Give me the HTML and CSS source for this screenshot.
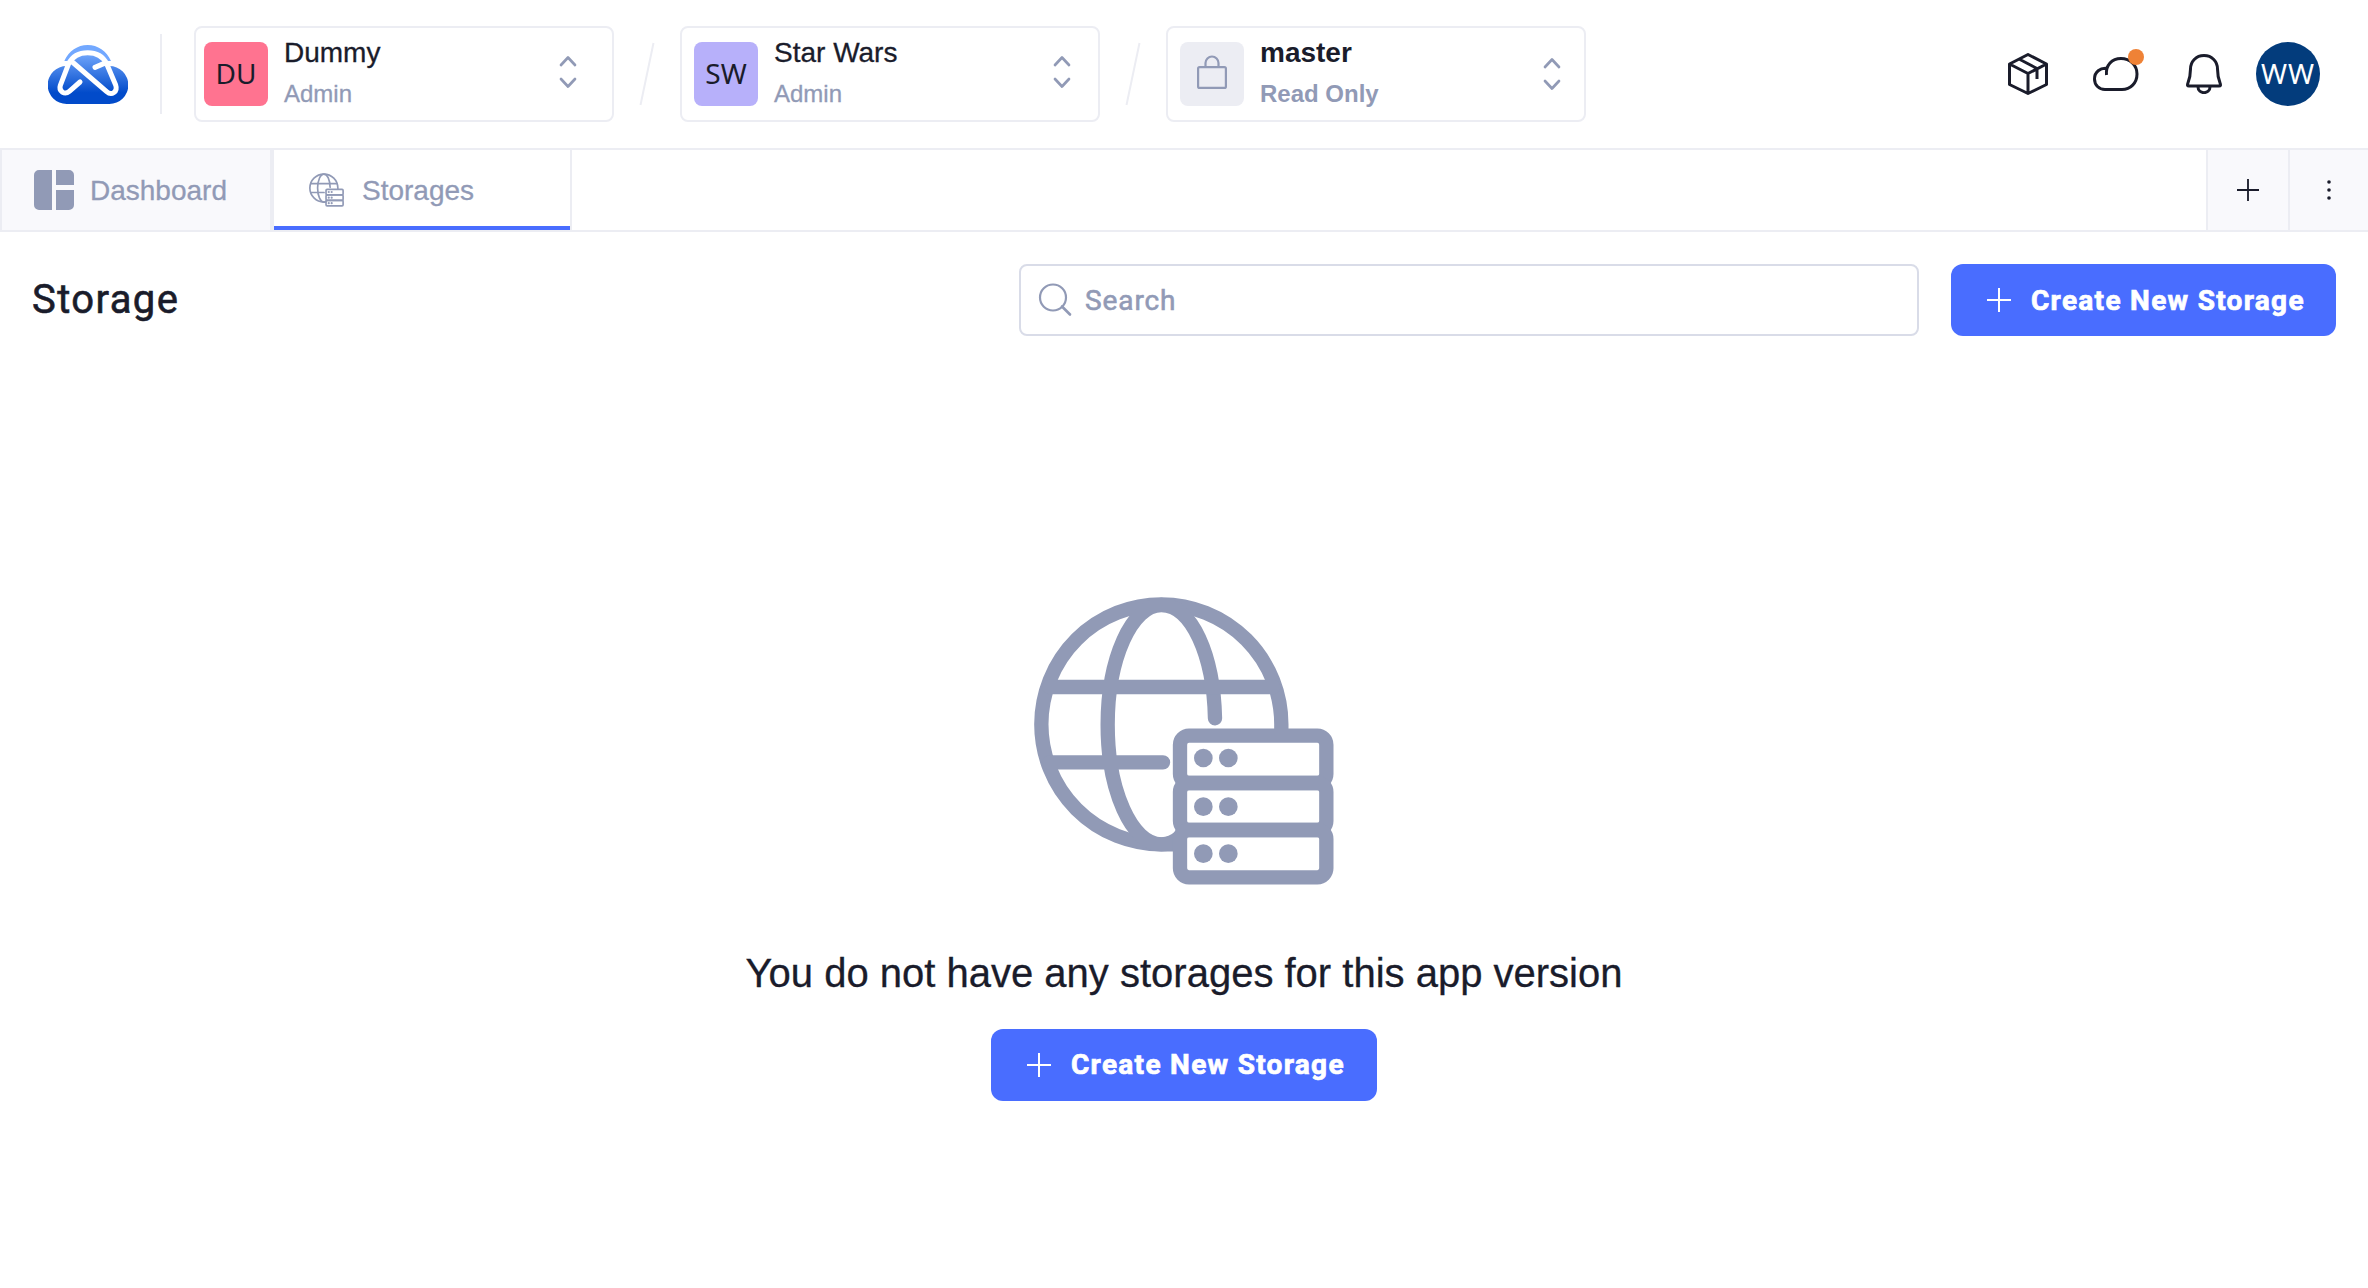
FILE: index.html
```html
<!DOCTYPE html>
<html lang="en">
<head>
<meta charset="utf-8">
<title>Storages</title>
<link rel="stylesheet" href="styles.css">
</head>
<body>
<svg class="sprite" aria-hidden="true">
  <symbol id="storage" viewBox="72 51 900 864">
    <g fill="none" stroke="currentColor" stroke-width="43" stroke-linecap="round">
      <path d="M814 455V434A360 360 0 1 0 454 793H500"/>
      <path d="M615 415C611 225 545 75 454 75C365 75 293 236 293 434S365 793 454 793C475 793 492 787 508 772"/>
      <path d="M118 321H790M118 547H459"/>
      <rect x="510" y="467" width="439" height="142" rx="27"/>
      <rect x="510" y="609" width="439" height="141" rx="27"/>
      <rect x="510" y="750" width="439" height="142" rx="27"/>
    </g>
    <g fill="currentColor">
      <circle cx="580" cy="534" r="28"/><circle cx="655" cy="534" r="28"/>
      <circle cx="580" cy="680" r="28"/><circle cx="655" cy="680" r="28"/>
      <circle cx="580" cy="821" r="28"/><circle cx="655" cy="821" r="28"/>
    </g>
  </symbol>
  <symbol id="updown" viewBox="0 0 18 34">
    <path d="M2 10L9 2.500L16 10M2 24L9 31.500L16 24" fill="none" stroke="currentColor" stroke-width="2.7" stroke-linecap="round" stroke-linejoin="round"/>
  </symbol>
  <symbol id="plus" viewBox="0 0 24 24">
    <path d="M12 0V24M0 12H24" fill="none" stroke="currentColor" stroke-width="2"/>
  </symbol>
</svg>

<header class="topbar">
  <svg class="logo" viewBox="54 42 240 177">
    <defs>
      <linearGradient id="sky" gradientUnits="userSpaceOnUse" x1="0" y1="60" x2="0" y2="185">
        <stop offset="0" stop-color="#78acff"/><stop offset="1" stop-color="#024bca"/>
      </linearGradient>
    </defs>
    <path d="M103 90C116 60 143 42 173 42S230 60 243 90H226C216 72 198 62 173 62S130 72 120 90Z" fill="#72a8ff"/>
    <path d="M110 105H118C130 80 148 68 173 68S216 80 228 105H238A57 57 0 0 1 238 219H110A57 57 0 0 1 110 105Z" fill="url(#sky)"/>
    <path d="M150 153L118 181C104 193 85 181 91 163L116 98C127 76 148 65 173 65S219 76 230 98L257 162C264 182 245 195 230 182L127 93M195 109L228 95" fill="none" stroke="#fff" stroke-width="15" stroke-linecap="round" stroke-linejoin="round"/>
  </svg>
  <span class="rule"></span>
  <button class="picker picker-first">
    <span class="badge pink">DU</span>
    <span class="who"><span class="name">Dummy</span><span class="role">Admin</span></span>
    <svg class="updown"><use href="#updown"/></svg>
  </button>
  <svg class="slash" viewBox="0 0 16 64"><path d="M14.500 1L1.500 63"/></svg>
  <button class="picker">
    <span class="badge violet">SW</span>
    <span class="who"><span class="name">Star Wars</span><span class="role">Admin</span></span>
    <svg class="updown"><use href="#updown"/></svg>
  </button>
  <svg class="slash" viewBox="0 0 16 64"><path d="M14.500 1L1.500 63"/></svg>
  <button class="picker picker-branch">
    <span class="badge grey">
      <svg class="lock" viewBox="0 0 30 34"><g fill="none" stroke="currentColor" stroke-width="2.200"><rect x="1.100" y="12.100" width="27.800" height="20.800" rx="1.500"/><path d="M8.500 12V8a6.500 6.500 0 0 1 13 0v4"/></g></svg>
    </span>
    <span class="who"><span class="name">master</span><span class="role">Read Only</span></span>
    <svg class="updown"><use href="#updown"/></svg>
  </button>

  <nav class="actions">
    <svg class="cube" viewBox="0 0 40 42"><path d="M20 1.500L38.500 11V31.500L20 40.500L1.500 31.500V11ZM1.500 11L20 20.500L38.500 11M20 20.500V40.500M11 6L29 15.500V26"/></svg>
    <span class="cloud-wrap">
      <svg class="cloud" viewBox="0 0 46 34"><path d="M13.500 18C12.500 8 19 1.500 28 1.500C37 1.500 44 8 44 17C44 26 37.500 32.500 29 32.500H12C6 32.500 1.500 28 1.500 22C1.500 15 7 10.500 14.500 11.500"/></svg>
      <span class="dot"></span>
    </span>
    <svg class="bell" viewBox="0 0 36 40"><path d="M18 1.500C10 1.500 4.500 7.500 4.500 15C4.500 21 4.200 23.500 1.800 29.500C1.200 31.500 1.500 32 3 32H33C34.500 32 34.800 31.500 34.200 29.500C31.800 23.500 31.500 21 31.500 15C31.500 7.500 26 1.500 18 1.500ZM12 33C12 40.500 24 40.500 24 33"/></svg>
    <span class="user">WW</span>
  </nav>
</header>

<div class="tabs">
  <a class="tab">
    <svg class="grid-icon" viewBox="0 0 40 40"><path d="M5 0H18V40H5A5 5 0 0 1 0 35V5A5 5 0 0 1 5 0ZM22 0H35A5 5 0 0 1 40 5V15H22ZM22 20H40V35A5 5 0 0 1 35 40H22Z" fill="currentColor"/></svg>
    <span>Dashboard</span>
  </a>
  <a class="tab active">
    <svg class="tab-storage"><use href="#storage"/></svg>
    <span>Storages</span>
  </a>
  <button class="tab-tool"><svg class="plus-tab"><use href="#plus"/></svg></button>
  <button class="tab-tool last"><svg class="dots" viewBox="0 0 4 20"><circle cx="2" cy="2" r="1.800"/><circle cx="2" cy="10" r="1.800"/><circle cx="2" cy="18" r="1.800"/></svg></button>
</div>

<main>
  <div class="toolbar">
    <h1>Storage</h1>
    <label class="search">
      <svg class="lens" viewBox="0 0 34 34"><g fill="none" stroke="currentColor" stroke-width="2.200"><circle cx="15" cy="14.500" r="13"/><path d="M24 23.500L32 31.500" stroke-width="2.600" stroke-linecap="round"/></g></svg>
      <span>Search</span>
    </label>
    <button class="create"><svg class="plus"><use href="#plus"/></svg><span>Create New Storage</span></button>
  </div>
  <section class="empty">
    <svg class="empty-icon"><use href="#storage"/></svg>
    <p>You do not have any storages for this app version</p>
    <button class="create create-empty"><svg class="plus"><use href="#plus"/></svg><span>Create New Storage</span></button>
  </section>
</main>
</body>
</html>
```
FILE: styles.css
```css
* { box-sizing: border-box; }
body {
  margin: 0;
  background: #fff;
  color: #1a1c2b;
  font-family: "Liberation Sans", sans-serif;
  font-size: 28px;
  -webkit-text-stroke: .3px;
}
button { font: inherit; color: inherit; border: 0; background: none; padding: 0; text-align: left; }
svg { display: block; flex: none; }
.sprite { position: absolute; width: 0; height: 0; }

.topbar { display: flex; align-items: center; height: 148px; padding: 0 48px; }
.logo { width: 80px; height: 59px; }
.rule { width: 2px; height: 80px; margin: 0 32px; background: #ecedf3; }
.picker {
  display: flex; align-items: center; flex: none;
  width: 420px; height: 96px; padding: 0 27px 0 12px;
  border: 2px solid #ecedf3; border-radius: 8px;
}
.picker-first { padding: 0 35px 0 8px; }
.picker-branch { padding-right: 23px; }
.badge {
  display: flex; align-items: center; justify-content: center;
  width: 64px; height: 64px; padding-bottom: 2px; border-radius: 8px;
  font-family: "Noto Sans", sans-serif; -webkit-text-stroke: 0;
}
.pink { background: #ff7390; }
.violet { background: #b7b0fa; }
.grey { background: #ecedf3; color: #919ab6; padding: 0 0 4px; }
.lock { width: 30px; height: 34px; }
.who { display: flex; flex-direction: column; flex: 1; margin-left: 16px; height: 84px; }
.name { line-height: 40px; height: 43px; margin-top: 1px; }
.role { font-size: 24px; line-height: 36px; color: #919ab6; }
.picker-branch .who { font-weight: 700; -webkit-text-stroke: 0; }
.updown { width: 18px; height: 34px; color: #919ab6; margin-top: -4px; }
.picker-branch .updown { margin-top: 0; }
.slash { width: 16px; height: 64px; margin: 0 25px; fill: none; stroke: #ecedf3; stroke-width: 2; }

.actions { display: flex; align-items: center; margin-left: auto; fill: none; stroke: #1a1c2b; stroke-width: 3; stroke-linejoin: round; }
.cube { width: 40px; height: 42px; }
.cloud-wrap { position: relative; margin: 0 47px 0 45px; }
.cloud { width: 46px; height: 34px; }
.dot { position: absolute; top: -8px; right: -5px; width: 16px; height: 16px; border-radius: 50%; background: #ef8236; }
.bell { width: 36px; height: 40px; margin-right: 34px; }
.user {
  display: flex; align-items: center; justify-content: center;
  width: 64px; height: 64px; padding-bottom: 2px; border-radius: 50%;
  background: #033c7c; color: #fff; font-family: "Noto Sans", sans-serif; letter-spacing: 1px;
  -webkit-text-stroke: 0;
}

.tabs { display: flex; height: 84px; border: solid #ecedf3; border-width: 2px 0 2px 2px; color: #919ab6; }
.tab { display: flex; align-items: center; width: 272px; padding-left: 32px; gap: 16px; background: #f9f9fc; border-right: 4px solid #ecedf3; }
.tab span { padding-top: 1px; }
.tab.active { width: 298px; padding-left: 35px; gap: 18px; background: #fff; border-right-width: 2px; box-shadow: inset 0 -4px #496dff; margin-right: auto; }
.grid-icon { width: 40px; height: 40px; }
.tab-storage { width: 35px; height: 34px; }
.tab-tool { display: flex; align-items: center; justify-content: center; width: 82px; background: #f9f9fc; border-left: 2px solid #ecedf3; color: #1a1c2b; }
.tab-tool.last { width: 80px; }
.plus-tab { width: 22px; height: 22px; }
.dots { width: 4px; height: 20px; fill: #1a1c2b; }

.toolbar { display: flex; align-items: center; padding: 32px 32px 0; }
h1 { margin: 0 auto 0 0; font: 400 40px/48px Roboto, sans-serif; letter-spacing: 1.4px; -webkit-text-stroke: .6px; }
.search {
  display: flex; align-items: center; gap: 13px;
  width: 900px; height: 72px; padding-left: 17px; margin-right: 32px;
  border: 2px solid #d9dce8; border-radius: 8px;
  color: #919ab6; font-family: Roboto, sans-serif; letter-spacing: .9px; -webkit-text-stroke: .6px;
}
.lens { width: 34px; height: 34px; }
.create {
  display: flex; align-items: center; gap: 20px;
  width: 385px; height: 72px; padding-left: 36px; border-radius: 12px;
  background: #496dff; color: #fff;
  font-family: Roboto, sans-serif; font-weight: 700; letter-spacing: 1.3px; white-space: nowrap;
  -webkit-text-stroke: .7px;
}
.create-empty { width: 386px; }
.create-empty span { margin-top: -2px; }
.plus { width: 24px; height: 24px; }
.empty { display: flex; flex-direction: column; align-items: center; padding-top: 261px; }
.empty-icon { width: 300px; height: 288px; color: #919ab6; }
.empty p { margin: 64px 0 32px; font-size: 40px; line-height: 48px; }
```
